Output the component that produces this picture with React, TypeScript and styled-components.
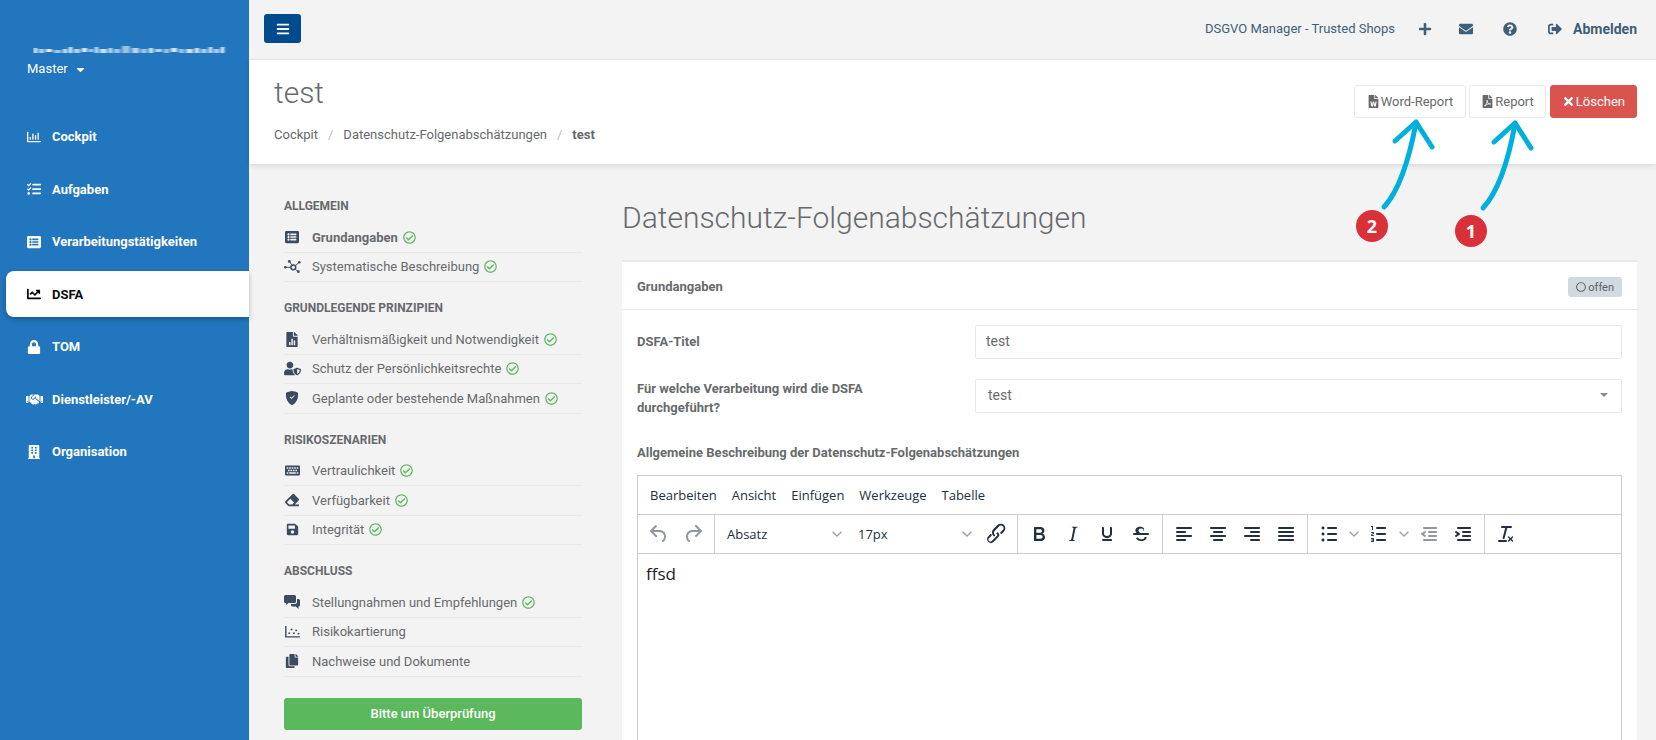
import React from 'react';
import styled, { createGlobalStyle } from 'styled-components';
import {
    FaBars,
    FaBuilding,
    FaCaretDown,
    FaChartLine,
    FaCopy,
    FaEnvelope,
    FaEraser,
    FaFilePdf,
    FaFileWord,
    FaHandshake,
    FaKeyboard,
    FaListAlt,
    FaLock,
    FaPlus,
    FaQuestionCircle,
    FaRegChartBar,
    FaRegCheckCircle,
    FaRegCircle,
    FaSave,
    FaSignOutAlt,
    FaTasks,
    FaTimes,
    FaUserShield,
} from 'react-icons/fa';
import { BsShieldFillCheck } from 'react-icons/bs';

const TEXT = '#676a6c';
const SLATE = '#3e5f77';
const NAV_ICON = '#3c4b5e';
const LINE = '#e7eaec';
const EDITOR_LINE = '#cccccc';

const GlobalStyle = createGlobalStyle`
    html, body {
        margin: 0;
        padding: 0;
        background: #f3f3f4;
    }
    body {
        font-family: Roboto, "Liberation Sans", sans-serif;
        font-size: 13px;
        color: ${TEXT};
    }
`;

const Page = styled.div`
    position: relative;
    display: flex;
    width: 1656px;
    height: 740px;
    overflow: hidden;
`;

const Sidebar = styled.aside`
    flex: 0 0 249px;
    background: #2176bd;
    color: #fff;
`;

const Brand = styled.div`
    height: 113.5px;
    padding: 44px 0 0 27px;
    box-sizing: border-box;
`;

const BlurredMail = styled.svg`
    display: block;
    width: 200px;
    height: 12px;
    margin-left: 6px;
`;

const MasterToggle = styled.div`
    display: flex;
    align-items: center;
    gap: 6px;
    margin-top: 4px;
    font-size: 13px;
    line-height: 18px;
    svg {
        font-size: 13px;
    }
`;

const SideNav = styled.nav`
    display: flex;
    flex-direction: column;
    gap: 6.5px;
`;

const SideItem = styled.div<{ $active?: boolean }>`
    display: flex;
    align-items: center;
    height: 46px;
    margin-left: 6px;
    padding-left: 21px;
    font-weight: 700;
    font-size: 13px;
    color: ${({ $active }) => ($active ? '#0b0b0b' : '#fff')};
    background: ${({ $active }) => ($active ? '#fff' : 'transparent')};
    border-radius: 8px 0 0 8px;
    box-shadow: ${({ $active }) => ($active ? '0 2px 5px rgba(0, 0, 0, 0.25)' : 'none')};
`;

const SideIcon = styled.span`
    display: flex;
    justify-content: center;
    width: 14px;
    margin-right: 11px;
    font-size: 14px;
    svg {
        flex-shrink: 0;
    }
`;

const Content = styled.div`
    flex: 1;
    min-width: 0;
`;

const TopBar = styled.header`
    display: flex;
    align-items: center;
    justify-content: space-between;
    height: 60px;
    padding: 0 19px 2px 15px;
    box-sizing: border-box;
    border-bottom: 1px solid ${LINE};
    color: ${SLATE};
`;

const MenuButton = styled.button`
    display: flex;
    align-items: center;
    justify-content: center;
    width: 37px;
    height: 29px;
    padding: 0;
    border: 0;
    border-radius: 3px;
    background: #004b8d;
    color: #fff;
    font-size: 14px;
`;

const TopActions = styled.div`
    display: flex;
    align-items: center;
`;

const TopIcon = styled.span<{ $left: number }>`
    display: flex;
    margin-left: ${({ $left }) => $left}px;
    font-size: 14px;
`;

const Logout = styled.span`
    margin-left: 11px;
    font-size: 14px;
    font-weight: 700;
`;

const Heading = styled.section`
    position: relative;
    display: flex;
    justify-content: space-between;
    height: 104px;
    padding: 0 19px 0 25px;
    box-sizing: border-box;
    background: #fff;
    box-shadow: 0 2px 5px rgba(0, 0, 0, 0.1);
`;

const PageTitle = styled.h2`
    margin: 15px 0 0;
    font-size: 30px;
    line-height: 36px;
    font-weight: 300;
`;

const Crumbs = styled.div`
    display: flex;
    margin-top: 15px;
    line-height: 18px;
`;

const CrumbSep = styled.span`
    padding: 0 10px;
    color: #bbb;
`;

const HeadingActions = styled.div`
    display: flex;
    padding-top: 25px;
    gap: 3px;
`;

const ActionButton = styled.div<{ $pad: number }>`
    display: flex;
    align-items: center;
    justify-content: center;
    gap: 1px;
    height: 33px;
    padding: 0 ${({ $pad }) => $pad}px;
    box-sizing: border-box;
    border: 1px solid ${LINE};
    border-radius: 3px;
    background: #fff;
    color: ${TEXT};
    font-size: 13px;
`;

const DangerButton = styled(ActionButton)`
    margin-left: 1px;
    border-color: #d9534f;
    background: #d9534f;
    color: #fff;
`;

const Body = styled.div`
    display: grid;
    grid-template-columns: 298px 1fr;
    column-gap: 40px;
    padding: 34px 19px 0 35px;
`;

const StepNav = styled.nav``;

const StepSection = styled.div`
    margin-bottom: 18px;
`;

const StepTitle = styled.div`
    margin-bottom: 9px;
    font-size: 12px;
    line-height: 16px;
    font-weight: 700;
    text-transform: uppercase;
`;

const StepRow = styled.div<{ $current?: boolean }>`
    display: flex;
    align-items: center;
    height: 29.5px;
    box-sizing: border-box;
    border-bottom: 1px solid ${LINE};
    font-weight: ${({ $current }) => ($current ? 700 : 400)};
`;

const StepIcon = styled.span`
    display: flex;
    justify-content: center;
    width: 16px;
    margin-right: 12px;
    font-size: 14px;
    color: ${NAV_ICON};
    svg {
        flex-shrink: 0;
    }
`;

const Done = styled(FaRegCheckCircle)`
    margin-left: 5px;
    font-size: 13px;
    color: #5cb85c;
`;

const ReviewButton = styled.div`
    display: flex;
    align-items: center;
    justify-content: center;
    height: 32px;
    margin-top: 21px;
    border-radius: 3px;
    background: #5cb85c;
    color: #fff;
    font-weight: 500;
`;

const Main = styled.main`
    min-width: 0;
`;

const MainTitle = styled.h1`
    margin: 1px 0 23px;
    font-size: 30px;
    line-height: 38px;
    font-weight: 300;
`;

const Card = styled.section`
    background: #fff;
    border-top: 2px solid ${LINE};
`;

const CardHeader = styled.div`
    display: flex;
    align-items: center;
    justify-content: space-between;
    height: 48px;
    padding: 3px 15px 0;
    box-sizing: border-box;
    border-bottom: 1px solid ${LINE};
    font-weight: 700;
`;

const CardTitle = styled.span`
    margin-bottom: 2px;
`;

const StatusBadge = styled.span`
    display: flex;
    align-items: center;
    gap: 2px;
    height: 20px;
    padding: 0 8px;
    border-radius: 3px;
    background: #d1dade;
    font-size: 11px;
    font-weight: 400;
    color: #5e5e5e;
    svg {
        font-size: 10px;
    }
`;

const CardBody = styled.div`
    padding: 15px;
`;

const FieldRow = styled.div`
    display: flex;
    align-items: flex-start;
    margin-bottom: 20px;
`;

const FieldLabel = styled.label<{ $inset?: boolean }>`
    flex: 0 0 338px;
    padding-top: ${({ $inset }) => ($inset ? 8 : 1)}px;
    padding-right: 90px;
    box-sizing: border-box;
    font-weight: 700;
    line-height: 18.5px;
`;

const TextField = styled.div`
    display: flex;
    align-items: center;
    justify-content: space-between;
    flex: 1;
    height: 34px;
    padding: 0 12px 2px 10px;
    box-sizing: border-box;
    border: 1px solid ${LINE};
    border-radius: 2px;
    font-size: 14px;
`;

const SelectValue = styled.span`
    padding-left: 2px;
`;

const SelectCaret = styled.span`
    width: 0;
    height: 0;
    margin-right: 1px;
    border-left: 4px solid transparent;
    border-right: 4px solid transparent;
    border-top: 4px solid #888;
`;

const EditorLabel = styled.div`
    margin: 27px 0 13px;
    font-weight: 700;
    line-height: 18px;
`;

const Editor = styled.div`
    height: 400px;
    border: 1px solid ${EDITOR_LINE};
`;

const MenuBar = styled.div`
    display: flex;
    align-items: center;
    gap: 15px;
    height: 38px;
    padding-left: 12px;
    border-bottom: 1px solid ${EDITOR_LINE};
    font-family: "Open Sans", sans-serif;
    font-size: 13px;
    color: #222f3e;
`;

const ToolBar = styled.div`
    display: flex;
    height: 38px;
    border-bottom: 1px solid ${EDITOR_LINE};
`;

const ToolGroup = styled.div<{ $last?: boolean }>`
    display: flex;
    align-items: center;
    padding: 0 4px;
    border-right: ${({ $last }) => ($last ? 0 : `1px solid ${EDITOR_LINE}`)};
`;

const ToolButton = styled.span<{ $muted?: boolean }>`
    display: flex;
    align-items: center;
    justify-content: center;
    width: 34px;
    height: 34px;
    svg {
        width: 24px;
        height: 24px;
        fill: ${({ $muted }) => ($muted ? 'rgba(34, 47, 62, 0.5)' : '#222f3e')};
    }
`;

const SplitArrow = styled.span`
    display: flex;
    align-items: center;
    justify-content: center;
    width: 16px;
    height: 34px;
`;

const ToolSelect = styled.span<{ $width: number; $gap: number }>`
    display: flex;
    align-items: center;
    justify-content: space-between;
    width: ${({ $width }) => $width}px;
    margin-right: ${({ $gap }) => $gap}px;
    padding: 0 4px 0 8px;
    box-sizing: border-box;
    font-family: "Open Sans", sans-serif;
    font-size: 13px;
    color: #222f3e;
`;

const EditorContent = styled.div`
    padding: 8px;
    font-family: "Open Sans", sans-serif;
    font-size: 17px;
    line-height: 24px;
    color: #222;
`;

const Annotations = styled.svg`
    position: absolute;
    top: 0;
    left: 0;
    width: 1656px;
    height: 740px;
    pointer-events: none;
`;

const Marker = styled.div<{ $x: number; $y: number }>`
    position: absolute;
    left: ${({ $x }) => $x - 16}px;
    top: ${({ $y }) => $y - 16}px;
    display: flex;
    align-items: center;
    justify-content: center;
    width: 32px;
    height: 32px;
    border-radius: 50%;
    background: #d9303a;
    color: #fff;
    font-family: "Open Sans", sans-serif;
    font-size: 18px;
    font-weight: 700;
`;

const Chevron = () => (
    <svg width="10" height="6" viewBox="0 0 10 6">
        <path d="M.6.8 5 5l4.4-4.2" fill="none" stroke="#99a0a8" strokeWidth="1.3" />
    </svg>
);

const ToolIcon = ({ d, muted }: { d: string; muted?: boolean }) => (
    <ToolButton $muted={muted}>
        <svg viewBox="0 0 24 24">
            <path d={d} fillRule="evenodd" />
        </svg>
    </ToolButton>
);

// the next icons are from the pro set, so they are drawn by hand
const FileChartIcon = () => (
    <svg width="12" height="15" viewBox="0 0 384 512" fill="currentColor">
        <path d="M224 136V0H24C10.7 0 0 10.7 0 24v464c0 13.3 10.7 24 24 24h336c13.3 0 24-10.7 24-24V160H248c-13.2 0-24-10.8-24-24zm160-14.1v6.1H256V0h6.1c6.4 0 12.5 2.5 17 7l97.9 98c4.5 4.5 7 10.6 7 16.9z" />
        <rect x="90" y="340" width="50" height="110" fill="#f3f3f4" />
        <rect x="170" y="230" width="50" height="220" fill="#f3f3f4" />
        <rect x="250" y="290" width="50" height="160" fill="#f3f3f4" />
    </svg>
);

const ScatterIcon = () => (
    <svg width="15" height="12" viewBox="0 0 16 13" fill="currentColor">
        <path d="M0 0h1.5v11H16v1.5H0z" />
        <rect x="3.5" y="7" width="2" height="1.6" />
        <rect x="6" y="3" width="2" height="1.6" />
        <rect x="8.5" y="7" width="2" height="1.6" />
        <rect x="11" y="4" width="2" height="1.6" />
        <rect x="13.5" y="7.5" width="2" height="1.6" />
    </svg>
);

const NetworkIcon = () => (
    <svg width="17" height="14" viewBox="0 0 17 14" fill="currentColor">
        <path d="M1 7.3h8.3L5.3 1M9.3 7.3l6-5M9.3 7.3l5 4.4" fill="none" stroke="currentColor" strokeWidth="1" />
        <circle cx="1.3" cy="7.3" r="1.3" />
        <circle cx="5.3" cy="1.4" r="1.4" />
        <circle cx="15.3" cy="2.3" r="1.3" />
        <circle cx="14.3" cy="11.7" r="1.4" />
        <circle cx="9.3" cy="7.3" r="2.4" fill="#f3f3f4" stroke="currentColor" strokeWidth="1.5" />
    </svg>
);

const BubblesIcon = () => (
    <svg width="16" height="14" viewBox="0 0 16 14" fill="currentColor">
        <path d="M1.5 0h9A1.5 1.5 0 0 1 12 1.5v5A1.5 1.5 0 0 1 10.5 8H4.5L2 10V8h-.5A1.5 1.5 0 0 1 0 6.5v-5A1.5 1.5 0 0 1 1.5 0z" />
        <path d="M13 4h1.5A1.5 1.5 0 0 1 16 5.5V10a1.5 1.5 0 0 1-1.5 1.5V14l-2.7-2.5H8.5A1.5 1.5 0 0 1 7 10V9h4a2 2 0 0 0 2-2z" />
    </svg>
);

const ICONS = {
    undo: 'M6.4 8H12c3.7 0 6.2 2 6.8 5.1.6 2.7-.4 5.6-2.3 6.8a1 1 0 0 1-1-1.8c1.1-.6 1.8-2.7 1.4-4.6-.5-2.1-2.1-3.5-4.9-3.5H6.4l3.3 3.3a1 1 0 1 1-1.4 1.4l-5-5a1 1 0 0 1 0-1.4l5-5a1 1 0 0 1 1.4 1.4L6.4 8z',
    redo: 'M17.6 10H12c-2.8 0-4.4 1.4-4.9 3.5-.4 2 .3 4 1.4 4.6a1 1 0 1 1-1 1.8c-2-1.2-2.9-4.1-2.3-6.8.6-3 3-5.1 6.8-5.1h5.6l-3.3-3.3a1 1 0 1 1 1.4-1.4l5 5a1 1 0 0 1 0 1.4l-5 5a1 1 0 0 1-1.4-1.4l3.3-3.3z',
    link: 'M6.2 12.3a1 1 0 0 1 1.4 1.4l-2.1 2.1a2 2 0 1 0 2.7 2.7l4.8-4.8a1 1 0 0 0 0-1.4 1 1 0 1 1 1.4-1.3 2.9 2.9 0 0 1 0 4L9.6 20a3.9 3.9 0 0 1-5.5-5.5l2-2.2zm11.6-.6a1 1 0 0 1-1.4-1.4l2-2a2.6 2.6 0 1 0-3.6-3.6l-4 4a3 3 0 0 0 0 4c.4.3.4 1 0 1.4a1 1 0 0 1-1.4 0 5 5 0 0 1 0-7l4-4a4.6 4.6 0 1 1 6.4 6.6z',
    bold: 'M7.8 19c-.3 0-.5 0-.6-.2l-.2-.5V5.7c0-.2 0-.4.2-.5l.6-.2h5c1.5 0 2.7.3 3.5 1 .7.6 1.1 1.4 1.1 2.5a3 3 0 0 1-.6 1.9c-.4.6-1 1-1.6 1.2.4.1.9.3 1.3.6s.8.7 1 1.2c.4.4.5 1 .5 1.6 0 1.3-.4 2.3-1.3 3-.8.7-2.1 1-3.8 1H7.8zm5-8.3c.6 0 1.2-.1 1.6-.5.4-.3.6-.7.6-1.3 0-1.1-.8-1.7-2.3-1.7H9.3v3.5h3.4zm.5 6c.7 0 1.3-.1 1.7-.4.4-.4.6-.9.6-1.5s-.2-1-.7-1.4c-.4-.3-1-.4-2-.4H9.4v3.8h4z',
    italic: 'M16.7 4.7l-.1.9h-.3c-.6 0-1 0-1.4.3-.3.3-.4.6-.5 1.1l-2.1 9.8v.6c0 .5.4.8 1.4.8h.2l-.2.8H8l.2-.8h.2c1.1 0 1.8-.5 2-1.5l2-9.8.1-.5c0-.6-.4-.8-1.4-.8h-.3l.2-.9h5.8z',
    underline: 'M16 5c.6 0 1 .4 1 1v5.5a4 4 0 0 1-.4 1.8l-1 1.4a5.3 5.3 0 0 1-5.5 1 5 5 0 0 1-1.6-1c-.5-.4-.8-.9-1.1-1.4a4 4 0 0 1-.4-1.8V6c0-.6.4-1 1-1s1 .4 1 1v5.5c0 .3 0 .6.2 1l.6.7a3.3 3.3 0 0 0 2.2.8 3.4 3.4 0 0 0 2.2-.8c.3-.2.4-.5.6-.8l.2-.9V6c0-.6.4-1 1-1zM8 17h8c.6 0 1 .4 1 1s-.4 1-1 1H8a1 1 0 0 1 0-2z',
    strike: 'M15.6 8.5c-.5-.7-1-1.1-1.3-1.3-.6-.4-1.3-.6-2-.6-2.7 0-2.8 1.7-2.8 2.1 0 1.3 1.2 1.9 2.4 2.2h7.1a1 1 0 0 1 0 2h-14a1 1 0 0 1 0-2h2.7c-.8-.6-1.3-1.4-1.3-2.2 0-1.2.6-3.9 4.8-3.9 1.6 0 3.2.6 4 1.9l-1.6 1.8zM8.5 15.3c.4.6 1.6 2 3.7 2 1.6 0 2.5-.4 3-1 .3-.4.4-.8.4-1.3h2c0 1.4-.7 4-5.4 4A6.2 6.2 0 0 1 7 16.4l1.5-1.1z',
    alignLeft: 'M5 5h14c.6 0 1 .4 1 1s-.4 1-1 1H5a1 1 0 1 1 0-2zm0 4h8c.6 0 1 .4 1 1s-.4 1-1 1H5a1 1 0 1 1 0-2zm0 8h8c.6 0 1 .4 1 1s-.4 1-1 1H5a1 1 0 0 1 0-2zm0-4h14c.6 0 1 .4 1 1s-.4 1-1 1H5a1 1 0 0 1 0-2z',
    alignCenter: 'M5 5h14c.6 0 1 .4 1 1s-.4 1-1 1H5a1 1 0 1 1 0-2zm3 4h8c.6 0 1 .4 1 1s-.4 1-1 1H8a1 1 0 1 1 0-2zm0 8h8c.6 0 1 .4 1 1s-.4 1-1 1H8a1 1 0 0 1 0-2zm-3-4h14c.6 0 1 .4 1 1s-.4 1-1 1H5a1 1 0 0 1 0-2z',
    alignRight: 'M5 5h14c.6 0 1 .4 1 1s-.4 1-1 1H5a1 1 0 1 1 0-2zm6 4h8c.6 0 1 .4 1 1s-.4 1-1 1h-8a1 1 0 0 1 0-2zm0 8h8c.6 0 1 .4 1 1s-.4 1-1 1h-8a1 1 0 0 1 0-2zm-6-4h14c.6 0 1 .4 1 1s-.4 1-1 1H5a1 1 0 0 1 0-2z',
    justify: 'M5 5h14c.6 0 1 .4 1 1s-.4 1-1 1H5a1 1 0 1 1 0-2zm0 4h14c.6 0 1 .4 1 1s-.4 1-1 1H5a1 1 0 1 1 0-2zm0 4h14c.6 0 1 .4 1 1s-.4 1-1 1H5a1 1 0 0 1 0-2zm0 4h14c.6 0 1 .4 1 1s-.4 1-1 1H5a1 1 0 0 1 0-2z',
    bullets: 'M11 5h8c.6 0 1 .4 1 1s-.4 1-1 1h-8a1 1 0 0 1 0-2zm0 6h8c.6 0 1 .4 1 1s-.4 1-1 1h-8a1 1 0 0 1 0-2zm0 6h8c.6 0 1 .4 1 1s-.4 1-1 1h-8a1 1 0 0 1 0-2zM4.5 6c0-.4.1-.8.4-1 .3-.4.7-.5 1.1-.5s.8.1 1 .4c.4.3.5.7.5 1.1s-.1.8-.4 1c-.3.4-.7.5-1.1.5s-.8-.1-1-.4c-.4-.3-.5-.7-.5-1.1zm0 6c0-.4.1-.8.4-1 .3-.4.7-.5 1.1-.5s.8.1 1 .4c.4.3.5.7.5 1.1s-.1.8-.4 1c-.3.4-.7.5-1.1.5s-.8-.1-1-.4c-.4-.3-.5-.7-.5-1.1zm0 6c0-.4.1-.8.4-1 .3-.4.7-.5 1.1-.5s.8.1 1 .4c.4.3.5.7.5 1.1s-.1.8-.4 1c-.3.4-.7.5-1.1.5s-.8-.1-1-.4c-.4-.3-.5-.7-.5-1.1z',
    numbers: 'M10 17h8c.6 0 1 .4 1 1s-.4 1-1 1h-8a1 1 0 0 1 0-2zm0-6h8c.6 0 1 .4 1 1s-.4 1-1 1h-8a1 1 0 0 1 0-2zm0-6h8c.6 0 1 .4 1 1s-.4 1-1 1h-8a1 1 0 1 1 0-2zM6 4v3.5c0 .3-.2.5-.5.5a.5.5 0 0 1-.5-.5V5h-.5a.5.5 0 0 1 0-1H6zm-1 8.8l.2.2h1.3c.3 0 .5.2.5.5s-.2.5-.5.5H4.9a1 1 0 0 1-.9-1V13c0-.4.3-.8.6-1l1.2-.4.2-.3a.2.2 0 0 0-.2-.2H4.5a.5.5 0 0 1-.5-.5c0-.3.2-.5.5-.5h1.6c.5 0 .9.4.9 1v.1c0 .4-.3.8-.6 1l-1.2.4-.2.3zM7 17v2c0 .6-.4 1-1 1H4.5a.5.5 0 0 1 0-1h1.2c.2 0 .3-.1.3-.3 0-.2-.1-.3-.3-.3H4.4a.4.4 0 1 1 0-.8h1.3c.2 0 .3-.1.3-.3 0-.2-.1-.3-.3-.3H4.5a.5.5 0 1 1 0-1H6c.6 0 1 .4 1 1z',
    outdent: 'M7 5h12c.6 0 1 .4 1 1s-.4 1-1 1H7a1 1 0 1 1 0-2zm5 4h7c.6 0 1 .4 1 1s-.4 1-1 1h-7a1 1 0 0 1 0-2zm0 4h7c.6 0 1 .4 1 1s-.4 1-1 1h-7a1 1 0 0 1 0-2zm-5 4h12a1 1 0 0 1 0 2H7a1 1 0 0 1 0-2zm1.6-3.8a1 1 0 0 1-1.2 1.6l-3-2a1 1 0 0 1 0-1.6l3-2a1 1 0 0 1 1.2 1.6L6.8 12l1.8 1.2z',
    indent: 'M7 5h12c.6 0 1 .4 1 1s-.4 1-1 1H7a1 1 0 1 1 0-2zm5 4h7c.6 0 1 .4 1 1s-.4 1-1 1h-7a1 1 0 0 1 0-2zm0 4h7c.6 0 1 .4 1 1s-.4 1-1 1h-7a1 1 0 0 1 0-2zm-5 4h12a1 1 0 0 1 0 2H7a1 1 0 0 1 0-2zm-2.6-3.8L6.2 12l-1.8-1.2a1 1 0 0 1 1.2-1.6l3 2a1 1 0 0 1 0 1.6l-3 2a1 1 0 1 1-1.2-1.6z',
    clear: 'M13.2 6a1 1 0 0 1 0 .2l-2.6 10a1 1 0 0 1-1 .8h-.2a.8.8 0 0 1-.8-1l2.6-10H8a1 1 0 1 1 0-2h9a1 1 0 0 1 0 2h-3.8zM5 18h7a1 1 0 0 1 0 2H5a1 1 0 0 1 0-2zm13 1.5L16.5 18 15 19.5a.7.7 0 0 1-1-1l1.5-1.5-1.5-1.5a.7.7 0 0 1 1-1l1.5 1.5 1.5-1.5a.7.7 0 0 1 1 1L17.5 17l1.5 1.5a.7.7 0 0 1-1 1z',
};

const sideItems = [
    { label: 'Cockpit', icon: <FaRegChartBar /> },
    { label: 'Aufgaben', icon: <FaTasks /> },
    { label: 'Verarbeitungstätigkeiten', icon: <FaListAlt /> },
    { label: 'DSFA', icon: <FaChartLine />, active: true },
    { label: 'TOM', icon: <FaLock /> },
    { label: 'Dienstleister/-AV', icon: <FaHandshake size={17} /> },
    { label: 'Organisation', icon: <FaBuilding /> },
];

const stepSections = [
    {
        title: 'Allgemein',
        steps: [
            { label: 'Grundangaben', icon: <FaListAlt />, done: true, current: true },
            { label: 'Systematische Beschreibung', icon: <NetworkIcon />, done: true },
        ],
    },
    {
        title: 'Grundlegende Prinzipien',
        steps: [
            { label: 'Verhältnismäßigkeit und Notwendigkeit', icon: <FileChartIcon />, done: true },
            { label: 'Schutz der Persönlichkeitsrechte', icon: <FaUserShield size={17} />, done: true },
            { label: 'Geplante oder bestehende Maßnahmen', icon: <BsShieldFillCheck />, done: true },
        ],
    },
    {
        title: 'Risikoszenarien',
        steps: [
            { label: 'Vertraulichkeit', icon: <FaKeyboard size={15} />, done: true },
            { label: 'Verfügbarkeit', icon: <FaEraser />, done: true },
            { label: 'Integrität', icon: <FaSave size={13} />, done: true },
        ],
    },
    {
        title: 'Abschluss',
        steps: [
            { label: 'Stellungnahmen und Empfehlungen', icon: <BubblesIcon />, done: true },
            { label: 'Risikokartierung', icon: <ScatterIcon /> },
            { label: 'Nachweise und Dokumente', icon: <FaCopy /> },
        ],
    },
];

// smeared out mail address above the tenant switch
const mailSmear = [
    [1, 4, 3, 5, 1], [6, 5, 5, 4, 0.7], [13, 5, 6, 3, 0.9], [21, 6, 7, 3, 0.6], [30, 5, 4, 4, 0.85],
    [36, 3, 3, 6, 1], [41, 5, 6, 4, 0.7], [49, 4, 5, 4, 0.9], [56, 5, 4, 3, 0.7], [62, 3, 3, 6, 0.9],
    [67, 5, 7, 4, 0.8], [76, 4, 3, 5, 0.9], [81, 5, 6, 4, 0.6], [89, 2, 8, 7, 0.55], [99, 4, 7, 5, 0.7],
    [108, 5, 6, 4, 0.6], [116, 4, 4, 5, 0.85], [122, 5, 7, 3, 0.7], [131, 5, 5, 4, 0.6], [138, 4, 6, 4, 0.85],
    [146, 5, 5, 4, 0.6], [153, 5, 7, 4, 0.8], [162, 4, 4, 5, 0.9], [168, 5, 6, 4, 0.65], [176, 3, 3, 6, 0.95],
    [181, 5, 5, 4, 0.7], [188, 3, 3, 6, 1],
];

const App = () => (
    <Page>
        <GlobalStyle />
        <Sidebar>
            <Brand>
                <BlurredMail viewBox="0 0 200 12">
                    <defs>
                        <filter id="smear">
                            <feGaussianBlur stdDeviation="1.4 0.7" />
                        </filter>
                    </defs>
                    <g fill="#fff" filter="url(#smear)">
                        {mailSmear.map(([x, y, w, h, o]) => (
                            <rect key={x} x={x} y={y} width={w} height={h} opacity={o} />
                        ))}
                    </g>
                </BlurredMail>
                <MasterToggle>
                    Master <FaCaretDown />
                </MasterToggle>
            </Brand>
            <SideNav>
                {sideItems.map(item => (
                    <SideItem key={item.label} $active={item.active}>
                        <SideIcon>{item.icon}</SideIcon>
                        {item.label}
                    </SideItem>
                ))}
            </SideNav>
        </Sidebar>
        <Content>
            <TopBar>
                <MenuButton>
                    <FaBars />
                </MenuButton>
                <TopActions>
                    DSGVO Manager - Trusted Shops
                    <TopIcon $left={23}>
                        <FaPlus />
                    </TopIcon>
                    <TopIcon $left={27}>
                        <FaEnvelope />
                    </TopIcon>
                    <TopIcon $left={30}>
                        <FaQuestionCircle />
                    </TopIcon>
                    <TopIcon $left={31}>
                        <FaSignOutAlt />
                    </TopIcon>
                    <Logout>Abmelden</Logout>
                </TopActions>
            </TopBar>
            <Heading>
                <div>
                    <PageTitle>test</PageTitle>
                    <Crumbs>
                        Cockpit
                        <CrumbSep>/</CrumbSep>
                        Datenschutz-Folgenabschätzungen
                        <CrumbSep>/</CrumbSep>
                        <b>test</b>
                    </Crumbs>
                </div>
                <HeadingActions>
                    <ActionButton $pad={12}>
                        <FaFileWord /> Word-Report
                    </ActionButton>
                    <ActionButton $pad={11}>
                        <FaFilePdf /> Report
                    </ActionButton>
                    <DangerButton $pad={11}>
                        <FaTimes /> Löschen
                    </DangerButton>
                </HeadingActions>
            </Heading>
            <Body>
                <StepNav>
                    {stepSections.map(section => (
                        <StepSection key={section.title}>
                            <StepTitle>{section.title}</StepTitle>
                            {section.steps.map(step => (
                                <StepRow key={step.label} $current={'current' in step && step.current}>
                                    <StepIcon>{step.icon}</StepIcon>
                                    {step.label}
                                    {step.done && <Done />}
                                </StepRow>
                            ))}
                        </StepSection>
                    ))}
                    <ReviewButton>Bitte um Überprüfung</ReviewButton>
                </StepNav>
                <Main>
                    <MainTitle>Datenschutz-Folgenabschätzungen</MainTitle>
                    <Card>
                        <CardHeader>
                            <CardTitle>Grundangaben</CardTitle>
                            <StatusBadge>
                                <FaRegCircle /> offen
                            </StatusBadge>
                        </CardHeader>
                        <CardBody>
                            <FieldRow>
                                <FieldLabel $inset>DSFA-Titel</FieldLabel>
                                <TextField>test</TextField>
                            </FieldRow>
                            <FieldRow>
                                <FieldLabel>Für welche Verarbeitung wird die DSFA durchgeführt?</FieldLabel>
                                <TextField>
                                    <SelectValue>test</SelectValue>
                                    <SelectCaret />
                                </TextField>
                            </FieldRow>
                            <EditorLabel>Allgemeine Beschreibung der Datenschutz-Folgenabschätzungen</EditorLabel>
                            <Editor>
                                <MenuBar>
                                    <span>Bearbeiten</span>
                                    <span>Ansicht</span>
                                    <span>Einfügen</span>
                                    <span>Werkzeuge</span>
                                    <span>Tabelle</span>
                                </MenuBar>
                                <ToolBar>
                                    <ToolGroup>
                                        <ToolIcon d={ICONS.undo} muted />
                                        <ToolIcon d={ICONS.redo} muted />
                                    </ToolGroup>
                                    <ToolGroup>
                                        <ToolSelect $width={127} $gap={4}>
                                            Absatz <Chevron />
                                        </ToolSelect>
                                        <ToolSelect $width={126} $gap={3}>
                                            17px <Chevron />
                                        </ToolSelect>
                                        <ToolIcon d={ICONS.link} />
                                    </ToolGroup>
                                    <ToolGroup>
                                        <ToolIcon d={ICONS.bold} />
                                        <ToolIcon d={ICONS.italic} />
                                        <ToolIcon d={ICONS.underline} />
                                        <ToolIcon d={ICONS.strike} />
                                    </ToolGroup>
                                    <ToolGroup>
                                        <ToolIcon d={ICONS.alignLeft} />
                                        <ToolIcon d={ICONS.alignCenter} />
                                        <ToolIcon d={ICONS.alignRight} />
                                        <ToolIcon d={ICONS.justify} />
                                    </ToolGroup>
                                    <ToolGroup>
                                        <ToolIcon d={ICONS.bullets} />
                                        <SplitArrow>
                                            <Chevron />
                                        </SplitArrow>
                                        <ToolIcon d={ICONS.numbers} />
                                        <SplitArrow>
                                            <Chevron />
                                        </SplitArrow>
                                        <ToolIcon d={ICONS.outdent} muted />
                                        <ToolIcon d={ICONS.indent} />
                                    </ToolGroup>
                                    <ToolGroup $last>
                                        <ToolIcon d={ICONS.clear} />
                                    </ToolGroup>
                                </ToolBar>
                                <EditorContent>ffsd</EditorContent>
                            </Editor>
                        </CardBody>
                    </Card>
                </Main>
            </Body>
        </Content>
        <Annotations viewBox="0 0 1656 740" fill="none" stroke="#00b0dc" strokeWidth="5" strokeLinecap="round" strokeLinejoin="round">
            <path d="M1384 207C1398 192 1408 165 1416 123" />
            <path d="M1395 141 1416 122 1432 147" />
            <path d="M1483 208C1497 193 1507 168 1515 124" />
            <path d="M1494 142 1515 123 1531 148" />
        </Annotations>
        <Marker $x={1372} $y={226}>2</Marker>
        <Marker $x={1471} $y={231}>1</Marker>
    </Page>
);

export default App;
